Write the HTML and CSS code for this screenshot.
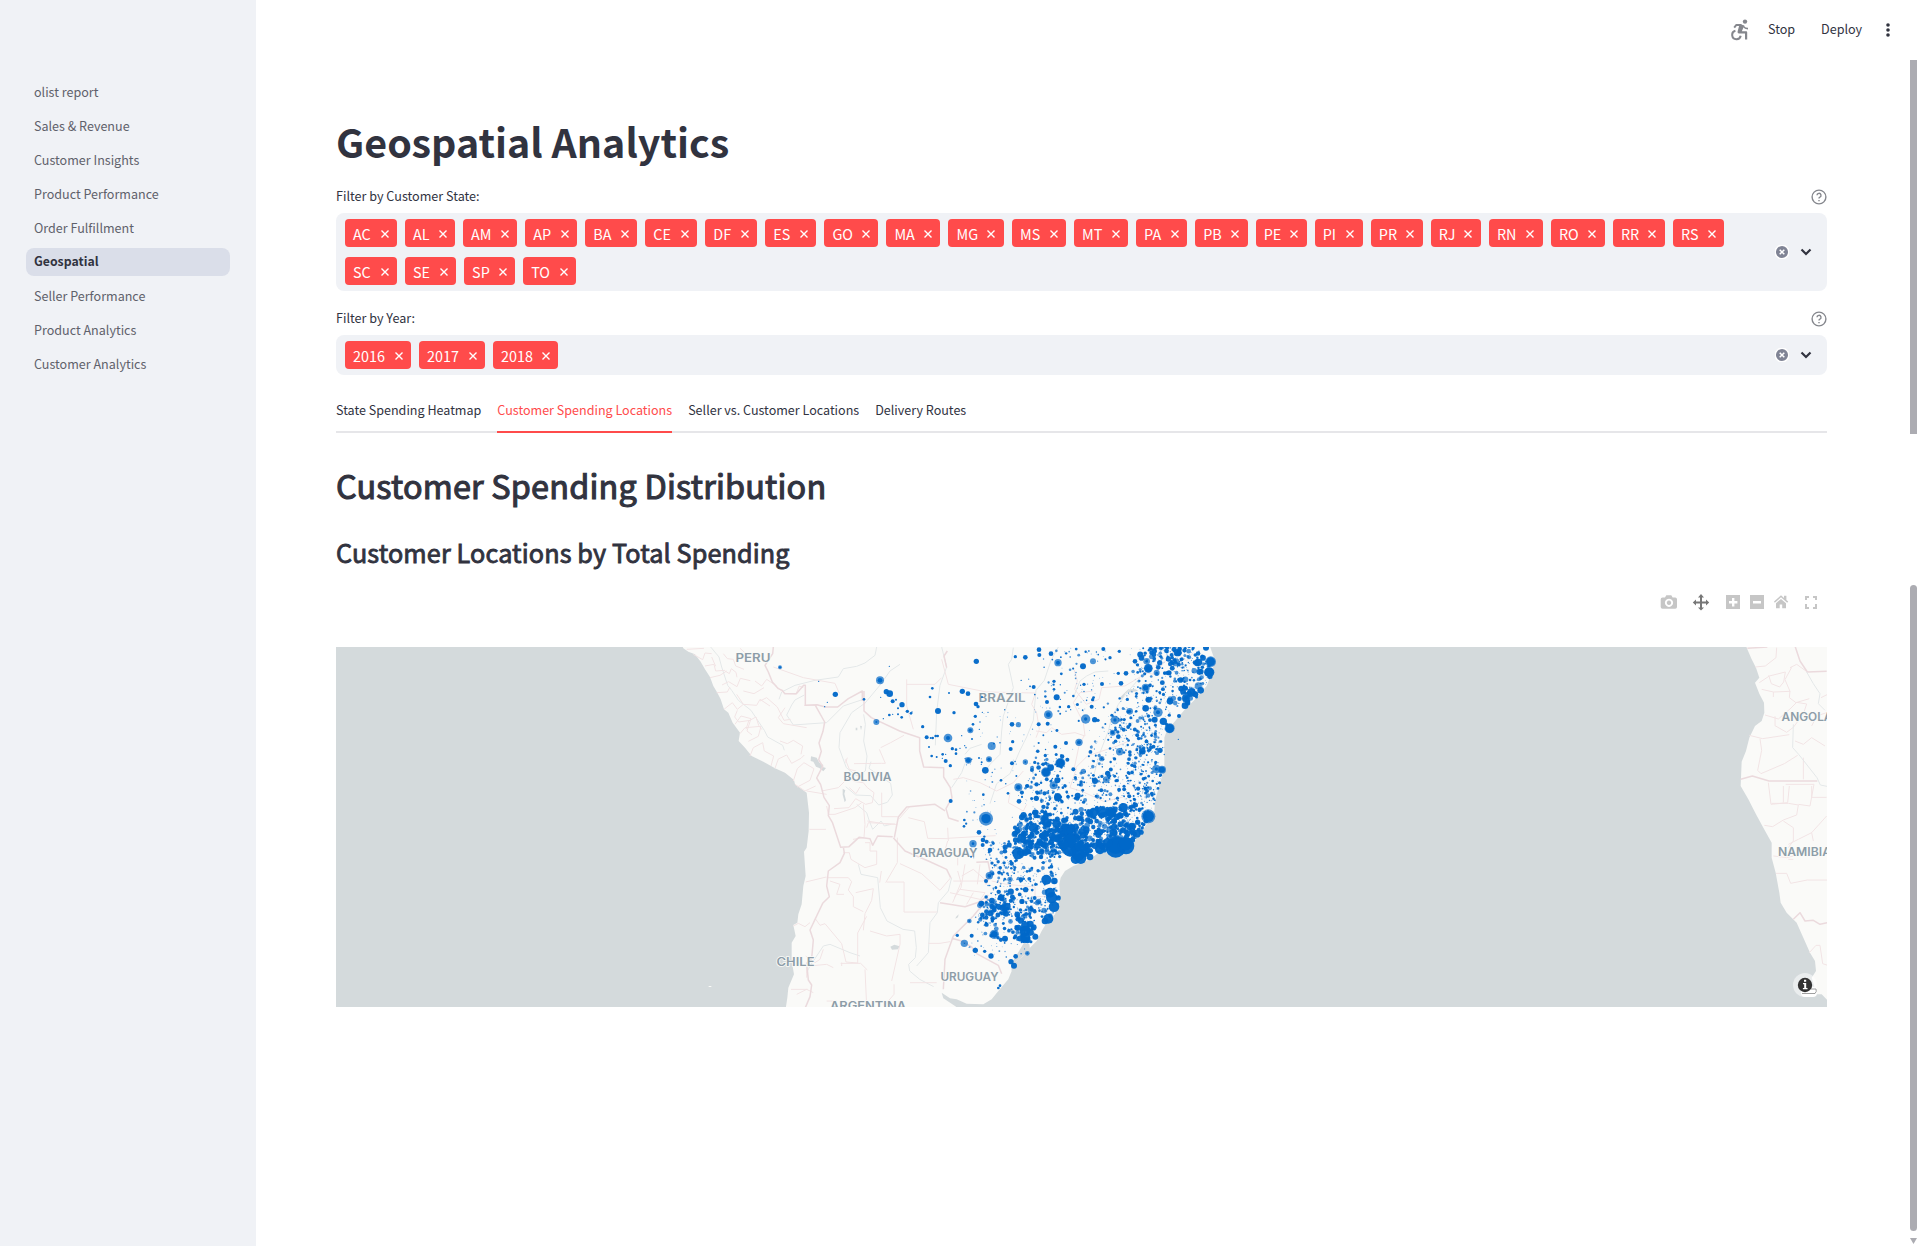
FILE: index.html
```html
<!DOCTYPE html>
<html lang="en">
<head>
<meta charset="utf-8">
<title>Geospatial Analytics</title>
<link rel="stylesheet" href="styles.css">
</head>
<body>
<div class="app">
  <aside class="sidebar">
    <nav class="nav">
      <a class="nav-item">olist report</a>
      <a class="nav-item">Sales &amp; Revenue</a>
      <a class="nav-item">Customer Insights</a>
      <a class="nav-item">Product Performance</a>
      <a class="nav-item">Order Fulfillment</a>
      <a class="nav-item active">Geospatial</a>
      <a class="nav-item">Seller Performance</a>
      <a class="nav-item">Product Analytics</a>
      <a class="nav-item">Customer Analytics</a>
    </nav>
  </aside>
  <div class="page">
    <header class="toolbar">
      <svg class="running" width="18" height="22" viewBox="0 0 18 22" fill="none" stroke="#85878d" stroke-width="2"><circle cx="14" cy="2.600" r="2.200" fill="#85878d" stroke="none"/><path d="M3.200 8.600L5.400 5.900H10.500" stroke-linejoin="round"/><path d="M8.600 4.900L13.400 6.600L10.800 12.300H15.200Q16.200 12.300 16.200 13.500V20.600H14V14.500H8Q6.200 14.300 6.600 12.500Z" fill="#85878d" stroke="none"/><path d="M12.400 7.400Q14 9.600 17 9.600" stroke-width="1.600"/><path d="M4.400 11.800A4.300 4.300 0 1 0 9.700 16.800"/></svg>
      <span class="stop">Stop</span>
      <span class="deploy">Deploy</span>
      <svg width="4" height="14" viewBox="0 0 4 14" fill="#31333f"><circle cx="2" cy="2" r="1.8"/><circle cx="2" cy="7" r="1.8"/><circle cx="2" cy="12" r="1.8"/></svg>
    </header>
    <main class="content">
      <h1>Geospatial Analytics</h1>
      <section class="filter">
        <div class="label"><span>Filter by Customer State:</span><svg class="help" viewBox="0 0 16 16"><circle cx="8" cy="8" r="6.9"/><path d="M6 6.3a2 2 0 1 1 2.9 1.8Q8 8.5 8 9.5M8 11v1.3"/></svg></div>
        <div class="select">
          <div class="tags" data-tags="AC:52 AL:50 AM:54 AP:52 BA:52 CE:52 DF:52 ES:51 GO:54 MA:54 MG:55.5 MS:54 MT:54 PA:51 PB:52.5 PE:51 PI:48 PR:52 RJ:50 RN:54 RO:54 RR:52 RS:51 SC:52 SE:51 SP:51 TO:53"></div>
          <svg class="clear" viewBox="0 0 14 14"><circle cx="7" cy="7" r="6.8" fill="#808495"/><path d="M4.7 4.7l4.6 4.6M9.3 4.7L4.7 9.3"/></svg>
          <svg class="chev" viewBox="0 0 12 8"><path d="M1.5 1.5L6 6L10.5 1.5"/></svg>
        </div>
      </section>
      <section class="filter second">
        <div class="label"><span>Filter by Year:</span><svg class="help" viewBox="0 0 16 16"><circle cx="8" cy="8" r="6.9"/><path d="M6 6.3a2 2 0 1 1 2.9 1.8Q8 8.5 8 9.5M8 11v1.3"/></svg></div>
        <div class="select">
          <div class="tags" data-tags="2016:66 2017:66 2018:65"></div>
          <svg class="clear" viewBox="0 0 14 14"><circle cx="7" cy="7" r="6.8" fill="#808495"/><path d="M4.7 4.7l4.6 4.6M9.3 4.7L4.7 9.3"/></svg>
          <svg class="chev" viewBox="0 0 12 8"><path d="M1.5 1.5L6 6L10.5 1.5"/></svg>
        </div>
      </section>
      <div class="tabs">
        <span class="tab">State Spending Heatmap</span>
        <span class="tab active">Customer Spending Locations</span>
        <span class="tab">Seller vs. Customer Locations</span>
        <span class="tab">Delivery Routes</span>
      </div>
      <h2>Customer Spending Distribution</h2>
      <h3>Customer Locations by Total Spending</h3>
      <div class="modebar">
        <svg width="160" height="18" viewBox="1660 593 160 18">
          <g fill="#c6c6c6">
            <path fill-rule="evenodd" d="M1662.5 597.5h2.5l1.3-2.3h5l1.3 2.3h2.6q1.8 0 1.8 1.8v7.7q0 1.8-1.8 1.8h-12.7q-1.8 0-1.8-1.8v-7.7q0-1.8 1.8-1.8zM1669 598.7a4.1 4.1 0 1 0 .01 0zM1669 600.6a2.2 2.2 0 1 1-.01 0z"/>
            <path fill-rule="evenodd" d="M1726 595h14v14h-14zM1732 598v3h-3v2.6h3v3h2.4v-3h3v-2.6h-3v-3z"/>
            <path fill-rule="evenodd" d="M1750 595h14v14h-14zM1753 601v2.4h8v-2.4z"/>
            <path d="M1774 601.5l7-6.2 3 2.6v-2.2h2.4v4.2l1.8 1.6-1 1.2-6.2-5.4-6.2 5.4z"/>
            <path d="M1776 603.3l5-4.3 5 4.3v4.9h-3.8v-3.7h-2.5v3.7h-3.7z"/>
            <path d="M1805 596h4v2h-2v2h-2zM1813 596h4v4h-2v-2h-2zM1805 604h2v3h2v2h-4zM1815 604h2v5h-4v-2h2z"/>
          </g>
          <path fill="#777" d="M1701 594l3 3.4h-2v4h4v-2l3.2 3-3.2 3v-2h-4v4h2l-3 3-3-3h2v-4h-4v2l-3.2-3 3.2-3v2h4v-4h-2z"/>
        </svg>
      </div>
      <svg class="map" viewBox="336 646 1491 360">
        <rect x="336" y="646" width="1491" height="360" fill="#d4dadc"/>
        <g transform="translate(660 640) scale(.33333)">
          <path id="land" fill="#fafaf8" d="M60 0L70 22 85 32 105 40 122 62 135 85 150 108 160 135 172 155 182 175 192 205 205 215 218 245 240 275 236 300 255 320 275 345 310 362 345 382 375 395 402 417 405 430 440 455 447 515 446 570 440 620 432 632 437 705 430 735 425 790 415 820 412 845 400 852 407 885 395 905 395 960 402 1000 385 1040 382 1070 376 1110H905L885 1095 850 1072 845 1055 870 1072 890 1075 920 1088 970 1090 995 1075 1015 1050 1045 1015 1055 990 1065 965 1090 945 1110 920 1130 900 1145 870 1160 845 1185 820 1195 790 1200 760 1198 730 1202 710 1215 690 1240 675 1265 665 1290 655 1310 640 1330 635 1370 635 1415 620 1425 600 1440 580 1460 550 1482 525 1485 480 1500 425 1513 385 1513 290 1520 270 1550 235 1575 205 1610 170 1640 135 1650 110 1665 60 1648 10 1640 0Z"/>
          <g fill="#d4dadc"><path d="M453 346l17 4 8 15 12 7-2 6 10 3-8 10-12-10-10-4-8-15-8-2zM548 443l8 5-3 10 5 20-4 6-6-23zM691 917l12-6 16 5-5 9-18 1zM1092 905l16 5 2 15-18 18-24 20-8 22-5 5-2-20 15-25 15-25zM587 260h5v8h-5zM600 254l6 2-3 12zM888 828l8-8-2 9-8 4zM1405 145h22l8 5-38 6-10 20-8-6z"/></g>
          <path d="M146 1035h8v3h-8z" fill="#fafaf8"/>
          <g class="river">
            <path d="M152 18l25 30 8 30 18 55 12 15 20 30 38 30 40 60 10 20 45 25 5 15M650 18l-5 25-30 23-25 10-40 7-15 25-70 10-60 15-40 20-8 22M610 175l-60 20-50 50-100 7-20-30 15-30 10-15 28-15M610 190l-35 25-35 60-3 45 22 60 32 25 25-15 5-45-10-45 5-50-5-30M720 70l-30 20-28 40-50 60M633 362l-6 20 65 45 5 35-15 22-26 8-24-28-45-2-30-25M590 490l30 25 8 25 10 25 10-10 15-15 10 15 20-5M595 670l8 30 50 10 8 90 20 40 48 25 35 5 5 50-3 30-20 20 3 20 30 25 42 22M600 945l-30-10-60-25-20 5-40 60-10 20M845 18l15 60-20 55-10 80-4 100M875 440l30-45 10-28M915 340l15-18 35-12M875 710l-10 40-30 35-3 30-22 30-5 90-35 40M1060 20l-5 35-10 15 15 70-30 85-5 45-5 70-30 30-20 30M1195 18l-22 40-20 60-25 30-8 90-20 50-20 40-30 70-40 30-20 60M1440 110l-35 40-30 40-20 40-10 40-25 65-22 80M1240 170l20-50 20-15 25-12 40-3"/>
          </g>
          <g class="admin">
            <path d="M340 78L430 110 525 127 538 157M430 140l-12-5-10 24-34-2-22-18M432 193h35M80 25l52-3M100 40l28 16 7-20 20 2M135 75l27-5 5 20 28-2M150 110l30-7 20-13M155 48l12 28M170 155l32-2 8-15M195 90l13 8 6-15 14 11 3 15M190 38l12 15 18 2 7 20 25 10M186 132l20-10 25 15 10-25 30 7M192 205l25-20 15 20 18-15-20-30M232 208l-8 20 12 15 35-5M250 190l40 3 10-18 30 20M225 250l18-25 30 8-12 37 15 12M240 278l15-18 48-4-8 30-30 15M258 265l8-25 22-12 8 25 10 13M270 345l10-25 28-15 5 25 28 15-8 30M345 382l10-28 25-12 15 25 28-15 10-10M360 300l22 8 18-10 28 17-5 25M400 420l12-37 20-18 30 18-12 35-38 20M405 430l30 20 32-15M260 40l-20-18M285 120l20 15 15-20 30 20M300 180l20-10 32 28 20 40 20-3M375 200l-20 30 15 18 70 12M250 150l32 8 30-18"/>
            <path d="M485 450l50-10 30-30 20 12 25 3 12 15 20 15-5 30-20 5-30-17-20 27-45 3M568 440l20 18 12-20M610 490l5 60-3 40-33 5M620 560l5-15 80 4M662 320l30-15 40-22M658 325l18 42-12 0-82 1M556 355l12 30 20 5M500 495l5 25 20 0 60-20 20-15M562 350l-5 15M665 455v72l48 0M622 540l60 10 30 0M440 450l60 10M448 565l50 0M550 635l18 0 5 20 42 25 35-10v-40h-20v-25l-15 0M712 590v75l-35 60M680 723h52v90h100M500 710h65l10 12-10 25 15 20v30l30 15M587 755l53-12-5 35-20 40-5 50M510 720l30 10-10 30 22 0M466 833l14 20 15-5 50 60 13 55 35 3v-90l27-50M437 723l62-15M400 855l15-8 20 10 15-12M437 945l28 20 15-10 10-30M450 975l50-5 20 10M542 967l60 0 20 20M410 1060l30-15 20 10M393 1045l50 0M545 965v10M500 1080l30 0M440 965v45M615 985l5 110M630 870l50 15 40-5 0 30-25 110M720 668l65 30 55 50 34-40M805 907h35l30-5M740 130h85l20-20M740 115v80l20 70M664 690l-5 35M702 1030v30l-30 35M750 1025h80"/>
            <path d="M718 533l30-35M745 530l48 12 10 50 60 1M863 600l-10 35 40 8 0 30M893 690l10 35-25 60M880 720l90 0 15-20M900 745l75 10-20 30M870 755l90 20M905 705l35-20 40 35M915 670l-12 70-20 30M940 755l-20 35M960 670l-8 60M865 600l-2-40"/>
            <path d="M1600 35l-20 25-38-30-60 70-40-8M845 55l20 75 115 23 145 3M1125 160l-10 30 15 25 8 50-10 25M1128 270l32 5 15-15 30 20 40-5 30 10-5-40-30-60 20-30 40-5M1242 85l10 35-8 25 35 45 38-15 8-35 70-5 50-30M1272 285l-15 30-15 70 40-40 90-30 35-15M1250 380l-10 30-10 30 38 12 65 30 60-15M880 415l30-5 50 15 50 25 50-25 30-35M862 592l85-5 60-3M1110 630l5-40M1100 490l-10 20-45-25 5-30M995 720l45 10 85 8 0 30 40-3"/>
          </g>
          <g class="border">
            <path d="M340 18l-2 20-23 35 10 20 12 30 18 20 12 5 7 10 35 0 22-25 5 0v60l35-2 25 7 37 0 32-25 42-23v30M466 193l28 50-5 28-12 35 7 25-8 25 12 20-18 35 12 20 10 38 16 25-3 30 12 20 25 75 25-2 30-28 33 4 8 20 15-28 45 2M550 617l3 20-13 28-35 25-5 45 8 32-20 20-38 80 10 30-5 55-15 15 5 50 10 15-5 35-17 40M612 150v60l22 20 85 40 60 20 0 40 12 48 60 2v28l20 32 5 30-18 33 8 28 30 10M855 510l-30-20-85 8-25 30-12 62M700 590l35 40 70 30 55 25 12 25M840 785l75 12 45-15 25-20M985 770l-45 55-45 45-15 15-25 70-5 90M875 892l30 8 30 18 15 20 65 35 10 25M977 730l15-28-8-40-35 2M860 80l-8-35 10-15M983 0"/>
          </g>
        </g>
        <g transform="translate(1720 640) scale(.33333)">
          <path fill="#fafaf8" d="M78 0L80 20 95 55 108 80 118 110 105 125 118 158 132 185 133 215 125 240 105 255 88 290 78 330 65 362 62 435 85 475 108 520 130 560 155 605 155 650 167 695 178 755 182 785 200 815 230 845 250 890 270 935 285 960 288 990 275 1010 290 1060 305 1060 325 1080V0Z"/>
          <path class="admin" d="M170 20l-2 30-32 25-30 3M210 80l20-10 28 20M118 125l30-20 48-12-5 30-12 15-25-10-8-25M125 145l35 8 50-2-15-35 20-37M160 153v15M210 150l-2 20 20 15 40-12M135 222l40 12 35-30 20-20 30 5-10 30-30 40-20 15-35-20v-28M88 283l40 10 80-12M120 293l5 35-12 60 10 10 70-30 40-25M225 300l25 10 25-20 40 25M250 350v65M303 170l20-10M275 255l15-30 30-10M275 435v34h45M145 425l8 65 50-5 5-50M190 435v50M155 487l50 0 30 5-5 30-40 15-32 20-25-4M235 490l35 5 12-65h-85M280 600l-5-25 45-50M190 540l30 20 0 40-15 20M205 610l30-15 40-20M160 645l40 5 20-5M205 655h15M168 697h32l12 30 50-10 60 0M268 935l20-22 12 0 8 55 15 5"/>
          <path class="border" d="M82 22l60-4M225 15l15 45 22 33 58-2M62 415l35-10 50 15 145 0M220 835l20-20 15 25 25-2 20 12 22-5"/>
          <path class="river" d="M260 93l20 35 20 30-5 30 20 20M220 250l-2 70 18 20 55 70 10 22 20 4"/>
        </g>
        <g class="names">
          <text x="735.5" y="661.200" textLength="35" lengthAdjust="spacingAndGlyphs">PERU</text>
          <text x="843.5" y="780.200" textLength="48" lengthAdjust="spacingAndGlyphs">BOLIVIA</text>
          <text x="912.5" y="856.200" textLength="65" lengthAdjust="spacingAndGlyphs">PARAGUAY</text>
          <text x="776.5" y="965" textLength="38" lengthAdjust="spacingAndGlyphs">CHILE</text>
          <text x="940.5" y="980" textLength="58" lengthAdjust="spacingAndGlyphs">URUGUAY</text>
          <text x="830" y="1009" textLength="76" lengthAdjust="spacingAndGlyphs">ARGENTINA</text>
          <text x="978.5" y="701" textLength="47" lengthAdjust="spacingAndGlyphs">BRAZIL</text>
          <text x="1781.5" y="719.500" textLength="51" lengthAdjust="spacingAndGlyphs">ANGOLA</text>
          <text x="1778" y="854.500" textLength="53" lengthAdjust="spacingAndGlyphs">NAMIBIA</text>
        </g>
        <g id="dots" transform="translate(930 640) scale(.33333)"></g>
        <circle cx="1805" cy="984" r="12" fill="#fff" opacity=".5"/>
        <rect x="1801" y="986" width="16" height="10" rx="4" fill="#fff"/>
        <path d="M1802 992.5h13q2-2 1-4.500h-5" fill="none" stroke="#888" stroke-width=".8"/>
        <circle cx="1805" cy="984" r="7.200" fill="#333"/>
        <path d="M1803 982h3.200v5h1.300v1.300h-4.600v-1.300h1.300v-3.700h-1.200zM1804 978.800h2.200v2h-2.200z" fill="#fff"/>
      </svg>
    </main>
  </div>
  <div class="scroll">
    <i class="thumb upper"></i>
    <i class="thumb lower"></i>
    <i class="arrow"></i>
  </div>
</div>
<script src="main.js"></script>
</body>
</html>
```
FILE: styles.css
```css
* { box-sizing: border-box; }
body {
  margin: 0;
  background: #fff;
  color: #31333f;
  font-family: "Noto Sans CJK SC", "Noto Sans", sans-serif;
  font-size: 12.6px;
  overflow: hidden;
}
svg { flex: none; display: block; }
.app { display: flex; width: 1920px; height: 1246px; }
.sidebar { width: 256px; flex: none; background: #f0f2f6; padding: 78px 26px 0; }
.nav { display: flex; flex-direction: column; gap: 6px; }
.nav-item { height: 28px; line-height: 27px; padding-left: 8px; border-radius: 8px; color: #5f616b; font-size: 12.55px; }
.nav-item.active { background: #dadee9; color: #31333f; font-weight: 700; font-size: 12.3px; }
.page { flex: 1; min-width: 0; }
.toolbar { height: 60px; display: flex; align-items: center; justify-content: flex-end; padding-right: 20px; }
.running { margin-right: 19px; }
.stop, .deploy { height: 20px; line-height: 18px; }
.stop { width: 53px; }
.deploy { width: 65px; }
.content { margin-left: 80px; width: 1491px; }
h1, h2, h3 { margin: 0; white-space: nowrap; }
h1 { padding-top: 53px; padding-bottom: 1px; font-size: 39.4px; line-height: 56px; font-weight: 700; }
h2, h3 { font-weight: 400; }
h2 { font-size: 32.4px; line-height: 44px; margin-top: 30px; letter-spacing: .2px; -webkit-text-stroke: 1.1px #31333f; }
h3 { font-size: 25.2px; line-height: 34px; margin-top: 28px; letter-spacing: .13px; -webkit-text-stroke: .85px #31333f; }
.filter { margin-top: 14px; }
.filter.second { margin-top: 15px; }
.label { display: flex; justify-content: space-between; align-items: center; height: 24px; line-height: 24px; }
.help { width: 16px; height: 16px; margin-top: 1px; fill: none; stroke: #85878d; stroke-width: 1.4; }
.select { display: flex; align-items: center; margin-top: 5px; padding: 6px 15px 6px 9px; border-radius: 8px; background: #f0f2f6; }
.tags { display: flex; flex-wrap: wrap; width: 1400px; gap: 10px 8.05px; }
.tag { display: flex; align-items: center; justify-content: space-between; height: 28px; padding: 0 8.5px 0 8px; border-radius: 4px; background: #ff4b4b; color: #fff; font-size: 14.4px; line-height: 27px; }
.tag svg { width: 8px; height: 8px; stroke: #fff; stroke-width: 1.4; margin-top: 1px; }
.clear { width: 14px; height: 14px; margin-left: 31px; stroke: #fff; stroke-width: 1.5; }
.chev { width: 12px; height: 8px; margin-left: 11px; fill: none; stroke: #31333f; stroke-width: 2.2; }
.tabs { display: flex; gap: 16px; height: 43px; margin-top: 15px; border-bottom: 2px solid #e6e6e9; font-size: 12.56px; }
.tab { height: 43px; line-height: 40px; white-space: nowrap; }
.tab.active { color: #ff4b4b; border-bottom: 2px solid #ff4b4b; }
.modebar { display: flex; justify-content: flex-end; height: 18px; margin-top: 24px; padding-right: 7px; }
.map { width: 1491px; height: 360px; margin-top: 36px; }
.admin { fill: none; stroke: #f2e4e5; stroke-width: 3; stroke-linejoin: round; }
.border { fill: none; stroke: #ebdadd; stroke-width: 4.5; stroke-linejoin: round; }
.river { fill: none; stroke: #e4e8e9; stroke-width: 3; stroke-linejoin: round; }
.names { font: 600 11.6px Inter, sans-serif; fill: #8d9da8; stroke: #fafaf8; stroke-width: 1.5px; paint-order: stroke; }
.scroll { display: flex; flex-direction: column; flex: none; width: 10px; padding-top: 60px; }
.thumb { display: block; width: 7px; background: #acacb2; }
.upper { height: 374px; }
.lower { height: 646px; margin-top: 151px; border-radius: 4px; }
.arrow { width: 7px; height: 6px; margin-top: 7px; background: #acacb2; clip-path: polygon(0 0, 100% 0, 50% 100%); }
```
FILE: main.js
```js
// Selected option chips
document.querySelectorAll('.tags').forEach(box => {
  box.innerHTML = box.dataset.tags.split(' ').map(t => {
    const [name, width] = t.split(':');
    return `<span class="tag" style="width:${width}px">${name}<svg viewBox="0 0 8 8"><path d="M.5 .5L7.5 7.5M7.5 .5L.5 7.5"/></svg></span>`;
  }).join('');
});

// Customer bubbles, in map units (x, y, radius)
const major = `139 61 8,97 151 8,114 158 7,138 189 7,144 197 5,24 210 9,72 215 5,136 226 5,129 250 4,121 268 9,121 268 5,54 291 13,54 291 6,185 315 12,185 315 1,115 358 10,115 358 7,177 355 9,177 355 5,166 388 10,67 323 5,61 374 5,47 360 6,78 338 4,62 480 6,246 250 7,265 251 8,265 251 1,242 324 6,248 302 5,246 367 6,286 363 8,286 363 3,355 221 13,355 221 7,326 250 6,353 248 6,351 183 6,380 169 9,467 234 14,467 234 5,494 236 8,504 238 5,555 237 13,555 237 5,548 275 9,548 275 5,447 304 11,447 304 6,408 306 6,376 317 6,384 65 11,384 65 6,459 76 9,489 61 9,489 61 1,363 38 7,327 26 7,328 42 6,286 49 7,256 47 5,311 138 6,372 121 5,372 145 4,416 197 5,488 176 5,485 197 6,462 130 5,516 129 6,573 127 7,565 97 5,588 97 7,520 24 6,568 31 5,540 50 5,615 61 7,650 61 10,650 61 4,655 82 13,655 84 8,680 95 9,680 95 3,647 140 12,647 140 8,656 176 9,647 202 10,737 64 12,737 64 5,743 35 11,806 64 11,842 62 16,842 62 13,838 94 15,835 94 12,828 20 9,812 148 10,784 154 13,796 160 9,765 194 10,720 181 10,684 214 14,684 214 6,674 236 9,700 241 11,719 262 15,719 262 13,747 225 6,745 295 2,696 386 12,696 386 9,679 384 13,679 384 5,690 328 8,637 331 10,565 287 7,599 211 10,599 211 5,569 332 11,569 332 4,515 353 8,515 353 4,533 397 8,529 416 10,529 416 3,495 420 9,460 391 8,460 391 1,430 385 6,391 366 15,391 366 13,348 394 15,348 394 12,362 380 10,412 356 6,382 418 9,371 433 12,371 433 5,383 470 11,383 466 10,443 464 9,265 439 12,265 439 7,292 435 6,319 472 8,267 481 7,234 457 4,213 418 4,168 533 21,168 533 14,655 526 21,655 526 17,147 574 7,129 608 11,129 608 4,159 597 7,170 602 6,180 627 7,158 612 6,103 537 4,102 556 4,160 461 4,178 704 11,178 704 6,168 720 6,118 840 7,118 840 3,103 907 11,103 907 2,136 928 8,164 931 5,183 945 8,193 880 14,193 880 10,225 893 9,125 884 6,82 883 5,243 962 8,252 974 9,257 946 7,292 937 7,292 937 3,210 1034 4,205 1041 4,349 716 15,373 720 10,360 755 15,365 770 17,372 797 16,355 833 15,345 840 10,285 870 16,286 890 15,285 855 12,316 887 9,240 715 8,240 715 3,273 716 7,287 746 8,230 797 12,557 620 30,557 612 27,588 615 25,588 608 20,510 625 15,533 605 14,437 654 15,452 652 17,445 640 20,420 625 22,420 600 20,450 615 16,400 612 15,480 648 10,465 635 13,550 575 12,620 578 12,605 555 10,515 512 16,545 517 14,580 500 14,490 515 14,480 520 10,350 545 14,380 548 13,310 560 14,265 637 18,285 635 10,275 590 13,391 322 1,386 768 4,2 291 3,17 285 4,5 345 4,-150 118 12,-150 118 7,-131 152 8,-121 158 10,-284 160 8,-112 181 6,-84 191 8,-68 211 5,-57 217 4,-54 213 2,-450 79 6,-450 79 3,-161 243 9,-161 243 3,-334 121 2,-308 184 2,-316 197 2,-122 76 2,-198 175 4,-22 257 5,-10 289 6,8 291 4,23 285 4,7 142 4,0 168 4,57 156 3,-96 202 3,-122 222 4,-112 220 2,-85 229 4,-96 220 3,-140 233 2,-148 169 2,-102 176 3,-3 318 3,78 326 4,90 322 2,104 314 2,20 348 3,38 340 4,47 340 2,37 352 2,126 294 3,95 284 2,150 243 2,148 265 2,157 214 2,174 214 2,156 168 3,147 351 3,155 364 3,154 370 2`;

const land = document.getElementById('land');
const svg = land.ownerSVGElement;
// The land outline uses an origin 810 units left of the bubble layer
const onLand = (x, y) => {
  const p = svg.createSVGPoint();
  p.x = x + 810; p.y = y;
  return land.isPointInFill(p);
};
let seed = 77;
const rnd = () => (seed = (seed * 16807) % 2147483647) / 2147483647;

// Dense areas: centre x, y, half-width, half-height, count, largest radius
const areas = [
  [345, 575, 84, 60, 390, 9], [500, 565, 105, 62, 360, 10], [590, 545, 60, 58, 180, 9],
  [285, 580, 32, 60, 55, 9], [420, 600, 80, 42, 150, 11], [330, 625, 100, 25, 95, 8],
  [470, 460, 190, 60, 175, 7], [350, 410, 60, 85, 85, 7], [590, 370, 110, 130, 240, 6],
  [640, 440, 60, 75, 95, 6], [640, 230, 80, 100, 140, 6], [720, 100, 105, 90, 200, 8],
  [795, 110, 50, 80, 100, 12], [725, 45, 90, 35, 70, 9], [470, 280, 180, 200, 100, 5],
  [420, 120, 140, 100, 60, 4], [670, 300, 45, 70, 45, 6], [210, 380, 110, 170, 50, 3],
  [215, 650, 45, 55, 60, 7], [210, 770, 40, 50, 65, 10], [260, 795, 90, 30, 90, 9],
  [300, 690, 85, 60, 80, 6], [360, 765, 35, 75, 60, 9], [230, 850, 85, 45, 75, 7],
  [285, 865, 35, 40, 60, 12], [175, 815, 40, 30, 45, 9], [200, 920, 90, 40, 25, 3],
  [240, 710, 70, 55, 40, 6], [140, 570, 55, 80, 20, 4], [560, 30, 120, 25, 22, 5]
];
let out = '';
const dot = (x, y, r, o) => { out += `<circle cx="${x}" cy="${y}" r="${r}" fill="#0068c9" fill-opacity="${o}"/>`; };
areas.forEach(([cx, cy, w, h, n, max]) => {
  for (let i = 0; i < n; i++) {
    const a = rnd() * 6.283, d = Math.sqrt(rnd());
    const x = (cx + Math.cos(a) * d * w * 1.08).toFixed(1), y = (cy + Math.sin(a) * d * h * 1.08).toFixed(1);
    const r = (1.2 + Math.pow(rnd(), 2.4) * (max - 1.2)).toFixed(1);
    if (onLand(+x, +y)) dot(x, y, r, r < 2 ? .65 : rnd() < .7 ? .95 : .7);
  }
});
major.split(',').forEach((m, i, all) => {
  const [x, y, r] = m.split(' ').map(Number);
  const layered = all.some((o, j) => j > i && o.startsWith(x + ' ' + y + ' '));
  dot(x, y, r, layered ? .7 : .96);
});
document.getElementById('dots').innerHTML = out;
```
